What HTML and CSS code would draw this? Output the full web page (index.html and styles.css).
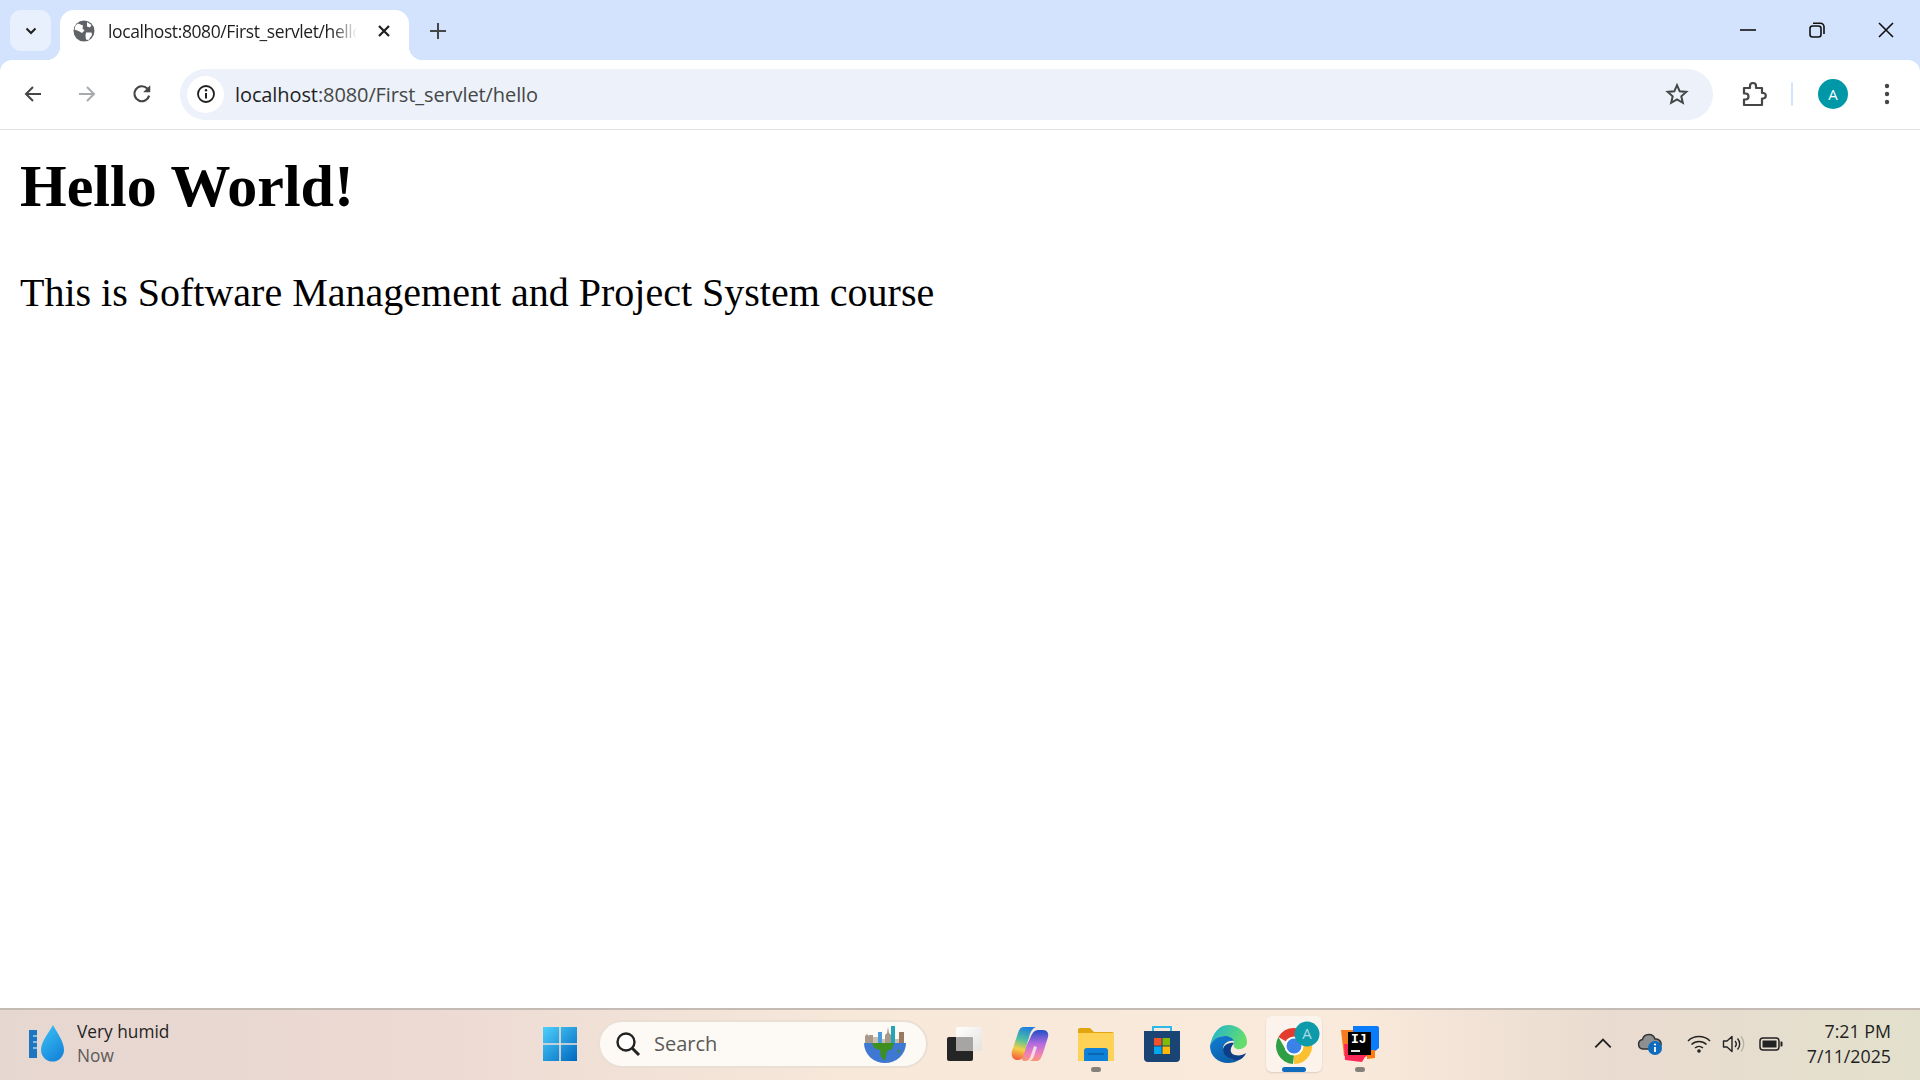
FILE: index.html
```html
<!DOCTYPE html>
<html lang="en">
<head>
    <meta charset="UTF-8">
    <title>localhost:8080/First_servlet/hello</title>
    <link rel="stylesheet" href="styles.css">
</head>
<body>
    <div class="tabstrip">
        <div class="tab-list">
            <svg width="16" height="16" viewBox="0 0 16 16"><path d="M3.500 5.500 8 10l4.500-4.500" fill="none" stroke="#1f1f1f" stroke-width="2"/></svg>
        </div>
        <div class="tab">
            <svg class="tab-globe" width="22" height="22" viewBox="0 0 22 22"><circle cx="11" cy="11" r="10.500" fill="#5f6368"/><path d="M5 3.500 10 5.500 9.500 8.500 11.500 10.500 9 13 5.500 11 1.500 9.500 2.500 5.500zM13 12.500h5.500l.5 2.500-3.500 5-2.500-.5-.5-4zM14 2l4.500 3-1.500 2.500-3-1z" fill="#fff"/></svg>
            <span class="tab-title">localhost:8080/First_servlet/hello</span>
            <svg class="tab-close" width="14" height="14" viewBox="0 0 14 14"><path d="M2 2l10 10M12 2 2 12" stroke="#1f1f1f" stroke-width="2.200"/></svg>
        </div>
        <svg class="new-tab" width="18" height="18" viewBox="0 0 18 18"><path d="M9 1v16M1 9h16" stroke="#444746" stroke-width="2"/></svg>
        <div class="window-controls">
            <svg width="16" height="16" viewBox="0 0 16 16"><path d="M0 8h16" stroke="#111" stroke-width="1.600"/></svg>
            <svg width="16" height="16" viewBox="0 0 16 16"><rect x="1" y="4" width="11" height="11" rx="2.500" fill="none" stroke="#111" stroke-width="1.600"/><path d="M4 1.200h7.500a3.500 3.500 0 0 1 3.500 3.500V12" fill="none" stroke="#111" stroke-width="1.600"/></svg>
            <svg width="16" height="16" viewBox="0 0 16 16"><path d="M1 1l14 14M15 1 1 15" stroke="#111" stroke-width="1.600"/></svg>
        </div>
    </div>

    <div class="toolbar">
        <svg class="nav-icon" width="20" height="20" viewBox="0 0 20 20"><path d="M18 10H3M10 3l-7 7 7 7" fill="none" stroke="#444746" stroke-width="2"/></svg>
        <svg class="nav-icon" width="20" height="20" viewBox="0 0 20 20"><path d="M2 10h15M10 3l7 7-7 7" fill="none" stroke="#a8abae" stroke-width="2"/></svg>
        <svg class="nav-icon" width="22" height="22" viewBox="0 0 20 20"><path d="M16.500 11.500A6.800 6.800 0 1 1 14.800 5" fill="none" stroke="#444746" stroke-width="2"/><path d="M17.500 2v6.500H11z" fill="#444746"/></svg>
        <div class="omnibox">
            <div class="site-info">
                <svg width="20" height="20" viewBox="0 0 20 20"><circle cx="10" cy="10" r="8" fill="none" stroke="#1f1f1f" stroke-width="1.800"/><path d="M10 9v5.500" stroke="#1f1f1f" stroke-width="2"/><circle cx="10" cy="6.300" r="1.200" fill="#1f1f1f"/></svg>
            </div>
            <span class="url"><span class="url-host">localhost</span>:8080/First_servlet/hello</span>
            <svg class="star" width="24" height="24" viewBox="0 0 24 24"><path d="M12 3.200l2.700 6.100 6.600.6-5 4.400 1.500 6.500L12 17.400l-5.800 3.400 1.500-6.500-5-4.400 6.600-.6z" fill="none" stroke="#444746" stroke-width="2"/></svg>
        </div>
        <svg class="extensions" width="26" height="26" viewBox="0 0 26 26"><path d="M3 7h6V5a3 3 0 0 1 6 0v2h6v5h1.500a2.800 2.800 0 0 1 0 5.500H21V24H3v-5.500h1.500a3 3 0 0 0 0-6H3z" fill="none" stroke="#444746" stroke-width="2.200" stroke-linejoin="round"/></svg>
        <div class="separator"></div>
        <div class="avatar">A</div>
        <svg class="menu" width="6" height="22" viewBox="0 0 6 22"><circle cx="3" cy="3" r="2.200" fill="#444746"/><circle cx="3" cy="11" r="2.200" fill="#444746"/><circle cx="3" cy="19" r="2.200" fill="#444746"/></svg>
    </div>

    <main class="page">
        <h1>Hello World!</h1>
        <p>This is Software Management and Project System course</p>
    </main>

    <footer class="taskbar">
        <div class="weather">
            <svg width="40" height="40" viewBox="0 0 40 40">
                <defs><linearGradient id="dropGrad" x1="0" y1="0" x2="0.600" y2="1"><stop offset="0" stop-color="#3cc4f4"/><stop offset="1" stop-color="#1787dc"/></linearGradient></defs>
                <rect x="1" y="6" width="8" height="28" fill="#1e75c0"/><path d="M5 12h4M5 18h4M5 24h4" stroke="#a5d4f3" stroke-width="1.500"/>
                <path d="M25 1c3 6 11 16 11 25a11.500 11.500 0 0 1-23 0C13 17 22 7 25 1z" fill="url(#dropGrad)"/>
            </svg>
            <div class="weather-text">
                <span class="weather-title">Very humid</span>
                <span class="weather-sub">Now</span>
            </div>
        </div>

        <div class="task-center">
            <svg class="start" width="36" height="36" viewBox="0 0 36 36">
                <defs><linearGradient id="winGrad" x1="0" y1="0" x2="1" y2="1"><stop offset="0" stop-color="#4dd0fb"/><stop offset="1" stop-color="#0067c0"/></linearGradient></defs>
                <path d="M1 1h16.200v16.200H1zM18.800 1H35v16.200H18.800zM1 18.800h16.200V35H1zM18.800 18.800H35V35H18.800z" fill="url(#winGrad)"/>
            </svg>
            <div class="search">
                <svg width="26" height="26" viewBox="0 0 26 26"><circle cx="11" cy="11" r="8.500" fill="#fff" stroke="#222" stroke-width="2.400"/><path d="M17 17l7 7" stroke="#222" stroke-width="3"/></svg>
                <span class="search-text">Search</span>
                <svg class="search-art" width="42" height="38" viewBox="0 0 42 38">
                    <path d="M1 20v-9l2-2 2 2v-1h4v10zM21 20V10l2-2 1-6 1 6 2 2v10z" fill="#a8998a"/>
                    <path d="M14 20V7h4v13z" fill="#4b9ade"/><path d="M27 20V1h4v19z" fill="#23a6b4"/><path d="M35 20V7h5v13z" fill="#9a7a5e"/><path d="M9 20v-8h5v8zM18 20v-6h3v6zM31 20v-6h4v6z" fill="#c9bfb2"/>
                    <path d="M0 18h42a21 20 0 0 1-42 0z" fill="#3f78d2"/>
                    <path d="M8 18h22l-2 6-5 2-2 10-4-4-1-7-6-2zM33 26l3-2-1 5z" fill="#3d8f1f"/>
                </svg>
            </div>
            <div class="task-icons">
                <div class="task-icon">
                    <svg width="36" height="36" viewBox="0 0 36 36">
                        <defs><linearGradient id="viewGrad" x1="0" y1="0" x2="1" y2="1"><stop offset="0" stop-color="#fff"/><stop offset="1" stop-color="#e4e2df"/></linearGradient></defs>
                        <rect x="1" y="11" width="26" height="24" rx="2" fill="#252525"/><rect x="10" y="1" width="26" height="24" rx="2" fill="url(#viewGrad)"/><rect x="10" y="11" width="17" height="14" rx="1" fill="#a7a5a3"/>
                    </svg>
                </div>
                <div class="task-icon">
                    <svg width="38" height="36" viewBox="0 0 38 36">
                        <defs>
                            <linearGradient id="copA" x1="0.600" y1="0" x2="0.400" y2="1"><stop offset="0" stop-color="#1f7fe0"/><stop offset="0.400" stop-color="#4fc0a0"/><stop offset="0.700" stop-color="#f4cf45"/><stop offset="1" stop-color="#f4633c"/></linearGradient>
                            <linearGradient id="copB" x1="0.500" y1="0" x2="0.500" y2="1"><stop offset="0" stop-color="#1d4fc8"/><stop offset="0.450" stop-color="#b56be0"/><stop offset="0.800" stop-color="#f284b0"/><stop offset="1" stop-color="#f59a70"/></linearGradient>
                        </defs>
                        <path d="M26 35H14c-3 0-4-2-3-5l9-20c2-4 4-6 8-6h4c4 0 6 3 5 7l-5 16c-2 5-3 8-6 8z" fill="url(#copB)"/>
                        <path d="M12 1h13c-3 1-5 4-6 7l-6 20c-1 4-3 6-6 6H5c-4-1-5-5-4-9L7 7c1-4 3-6 5-6z" fill="url(#copA)"/>
                        <path d="M14 35c3 0 5-2 6-6l3-9 3 1-3 9c-1 3-3 5-5 5z" fill="#fff" opacity="0.700"/>
                    </svg>
                </div>
                <div class="task-icon is-open">
                    <svg width="36" height="34" viewBox="0 0 36 34"><path d="M0 3a2 2 0 0 1 2-2h10l4 4h18a2 2 0 0 1 2 2v6H0z" fill="#e3a50e"/><path d="M0 6h36v28H0z" fill="#fdd257"/><path d="M6 34V24a3 3 0 0 1 3-3h18a3 3 0 0 1 3 3v10z" fill="#0f80d7"/><path d="M10 27h16" stroke="#0a5da6" stroke-width="1.500"/></svg>
                </div>
                <div class="task-icon">
                    <svg width="36" height="36" viewBox="0 0 36 36"><path d="M9 6V1h18v5" fill="none" stroke="#2ab9ea" stroke-width="2"/><path d="M0 5h36v27a4 4 0 0 1-4 4H4a4 4 0 0 1-4-4z" fill="#1a4474"/><path d="M10 12h7.500v7.500H10z" fill="#f0522a"/><path d="M18.500 12H26v7.500h-7.500z" fill="#80bb06"/><path d="M10 20.500h7.500V28H10z" fill="#03a6f0"/><path d="M18.500 20.500H26V28h-7.500z" fill="#ffba08"/></svg>
                </div>
                <div class="task-icon">
                    <svg width="38" height="38" viewBox="0 0 38 38">
                        <defs>
                            <linearGradient id="edgeA" x1="0" y1="0" x2="1" y2="0.400"><stop offset="0" stop-color="#1cb0d8"/><stop offset="1" stop-color="#63de6c"/></linearGradient>
                            <linearGradient id="edgeB" x1="0" y1="0" x2="0.600" y2="1"><stop offset="0" stop-color="#137ed4"/><stop offset="1" stop-color="#0a5ea8"/></linearGradient>
                        </defs>
                        <path d="M19 0c11 0 19 8 19 17 0 5-5 8-10 7-3-1-4-3-3-6 0-4-4-7-9-7-7 0-13 5-15 10C3 9 10 0 19 0z" fill="url(#edgeA)"/>
                        <path d="M1 21c2-6 8-10 15-10 4 0 8 2 9 5-5-1-11 2-11 8 0 6 7 12 16 11-3 2-7 3-11 3C9 38 1 31 1 21z" fill="url(#edgeB)"/>
                        <path d="M25 18c-3-1-11 1-11 7s7 11 16 10c3-1 6-4 7-7-3 2-7 3-11 2-5-1-6-6-1-12z" fill="#0c3f87"/>
                    </svg>
                </div>
                <div class="task-icon is-active">
                    <svg width="52" height="46" viewBox="-6 0 52 46">
                        <path d="M20 7a18 18 0 0 1 15.600 9H20a9 9 0 0 0-7.800 4.500L4.400 16A18 18 0 0 1 20 7z" fill="#e33b2e"/>
                        <path d="M35.600 16A18 18 0 0 1 20 43l7.800-13.500A9 9 0 0 0 27.800 20.500L27 16z" fill="#fbc02d"/>
                        <path d="M4.400 16l7.800 13.500A9 9 0 0 0 20 34l-1 9A18 18 0 0 1 4.400 16z" fill="#2f9e44"/>
                        <path d="M20 43l7.800-13.500L20 34z" fill="#fbc02d"/>
                        <circle cx="20" cy="25" r="9.500" fill="#fff"/><circle cx="20" cy="25" r="7.500" fill="#3b82e8"/>
                        <circle cx="33" cy="13" r="12.500" fill="#0d9bab"/>
                        <text x="33" y="18" text-anchor="middle" class="chrome-badge">A</text>
                    </svg>
                </div>
                <div class="task-icon is-open">
                    <svg width="38" height="36" viewBox="0 0 38 36">
                        <path d="M0 4h14l-2 26H3z" fill="#f57c1f"/><path d="M12 0h24a2 2 0 0 1 2 2v20l-10 8H12z" fill="#087cfa"/><path d="M3 18h25l2 10-6 3-3 5-17-2z" fill="#fe2857"/><path d="M26 24h8v8l-8 1z" fill="#fd7b0f"/>
                        <rect x="7" y="6" width="23" height="23" fill="#000"/>
                        <text x="10" y="17" class="ij-text">IJ</text><path d="M10 25h9" stroke="#fff" stroke-width="1.800"/>
                    </svg>
                </div>
            </div>
        </div>

        <div class="tray">
            <svg class="tray-chevron" width="18" height="11" viewBox="0 0 16 10"><path d="M1 8.500l7-7 7 7" fill="none" stroke="#222" stroke-width="1.700"/></svg>
            <svg class="tray-cloud" width="26" height="22" viewBox="0 0 26 22"><path d="M6 16a4.800 4.800 0 0 1-.5-9.500A6.500 6.500 0 0 1 18 6a5 5 0 0 1 2 10z" fill="#8d8f90" stroke="#333" stroke-width="1.500"/><circle cx="18" cy="15" r="7" fill="#0f6cbd"/><path d="M18 14v5" stroke="#fff" stroke-width="1.800"/><circle cx="18" cy="11.500" r="1.100" fill="#fff"/></svg>
            <svg class="tray-wifi" width="24" height="20" viewBox="0 0 24 20"><path d="M1 7a16 16 0 0 1 22 0M4.500 10.500a11 11 0 0 1 15 0M8 14a6 6 0 0 1 8 0" fill="none" stroke="#222" stroke-width="1.500"/><circle cx="12" cy="17" r="1.800" fill="#222"/></svg>
            <svg class="tray-sound" width="24" height="20" viewBox="0 0 24 20"><path d="M1.500 7v6h3.500l5 4.500v-15L5 7z" fill="none" stroke="#222" stroke-width="1.400" stroke-linejoin="round"/><path d="M13 7a4.500 4.500 0 0 1 0 6M15.500 4.500a8 8 0 0 1 0 11" fill="none" stroke="#222" stroke-width="1.400"/><path d="M19 2.500a11.500 11.500 0 0 1 0 15" fill="none" stroke="#b5b0a6" stroke-width="1.200"/></svg>
            <svg class="tray-battery" width="24" height="14" viewBox="0 0 24 14"><rect x="1" y="1" width="19" height="12" rx="3" fill="none" stroke="#222" stroke-width="1.500"/><rect x="3.500" y="3.500" width="14" height="7" fill="#222"/><path d="M21.500 4.500h1a1 1 0 0 1 1 1v3a1 1 0 0 1-1 1h-1z" fill="#222"/></svg>
            <div class="clock">
                <span>7:21 PM</span>
                <span>7/11/2025</span>
            </div>
        </div>
    </footer>
</body>
</html>
```

FILE: styles.css
```css
* {
    box-sizing: border-box;
}
html, body {
    height: 100%;
}
body {
    margin: 0;
    display: flex;
    flex-direction: column;
    height: 1080px;
    overflow: hidden;
    background-color: #d3e3fd;
    font-family: "Open Sans", "Noto Sans", sans-serif;
    color: #1f1f1f;
}
svg {
    display: block;
    flex-shrink: 0;
}

/* tab strip */
.tabstrip {
    display: flex;
    align-items: flex-end;
    height: 60px;
    padding-left: 10px;
}
.tab-list {
    display: flex;
    align-items: center;
    justify-content: center;
    align-self: flex-start;
    width: 41px;
    height: 41px;
    margin-top: 10px;
    border-radius: 11px;
    background-color: #e9f0fd;
}
.tab {
    position: relative;
    display: flex;
    align-items: center;
    width: 349px;
    height: 50px;
    margin-left: 9px;
    padding: 0 18px 8px 13px;
    background-color: #fff;
    border-radius: 14px 14px 0 0;
}
.tab::before,
.tab::after {
    content: "";
    position: absolute;
    bottom: 0;
    width: 14px;
    height: 14px;
}
.tab::before {
    left: -14px;
    background: radial-gradient(circle at 0 0, transparent 14px, #fff 14.500px);
}
.tab::after {
    right: -14px;
    background: radial-gradient(circle at 100% 0, transparent 14px, #fff 14.500px);
}
.tab-title {
    flex: 1;
    margin-left: 13px;
    overflow: hidden;
    white-space: nowrap;
    font-size: 17.500px;
    letter-spacing: -0.400px;
    -webkit-mask-image: linear-gradient(to right, #000 90%, transparent 100%);
    mask-image: linear-gradient(to right, #000 90%, transparent 100%);
}
.tab-close {
    margin-left: 20px;
}
.new-tab {
    align-self: flex-start;
    margin: 22px 0 0 20px;
}
.window-controls {
    display: flex;
    align-self: flex-start;
    gap: 53px;
    margin: 22px 26px 0 auto;
}

/* toolbar */
.toolbar {
    display: flex;
    align-items: center;
    height: 70px;
    padding: 0 30px 1px 23px;
    background-color: #fff;
    border-bottom: 1px solid #e3e3e3;
    border-radius: 12px 12px 0 0;
}
.nav-icon {
    margin-right: 34px;
}
.nav-icon:nth-child(3) {
    margin-right: 27px;
}
.omnibox {
    display: flex;
    align-items: center;
    width: 1533px;
    height: 51px;
    padding: 0 24px 0 7px;
    border-radius: 26px;
    background-color: #ecf1fa;
}
.site-info {
    display: flex;
    align-items: center;
    justify-content: center;
    width: 37px;
    height: 37px;
    border-radius: 50%;
    background-color: #fff;
}
.url {
    flex: 1;
    margin-left: 11px;
    font-size: 20px;
    letter-spacing: -0.100px;
    color: #444746;
}
.url-host {
    color: #1f1f1f;
}
.extensions {
    margin-left: 28px;
}
.separator {
    width: 2px;
    height: 24px;
    margin-left: 24px;
    border-radius: 1px;
    background-color: #d3e3fd;
}
.avatar {
    display: flex;
    align-items: center;
    justify-content: center;
    width: 30px;
    height: 30px;
    margin-left: 25px;
    border-radius: 50%;
    background-color: #0097a7;
    color: #fff;
    font-size: 15px;
}
.menu {
    margin-left: 36px;
}

/* page content */
.page {
    flex: 1;
    padding: 0 20px;
    background-color: #fff;
    font-family: "Liberation Serif", serif;
    color: #000;
}
.page h1 {
    margin: 22px 0 0;
    font-size: 60px;
    line-height: 69px;
    font-weight: bold;
}
.page p {
    margin: 49px 0 0;
    font-size: 40px;
    line-height: 46px;
}

/* taskbar */
.taskbar {
    display: flex;
    align-items: center;
    height: 72px;
    padding: 0 0 3px 28px;
    border-top: 2px solid #c4bcb4;
    background: linear-gradient(to right, #e7d7d1 0%, #ebd9d2 20%, #f7e8da 45%, #f9eadc 70%, #eadbd0 84%, #e2e0cc 100%);
}
.weather {
    display: flex;
    align-items: center;
    width: 514px;
    gap: 9px;
}
.weather-text {
    display: flex;
    flex-direction: column;
    gap: 3px;
    font-size: 17.300px;
    line-height: 21px;
}
.weather-sub {
    color: #5d5a58;
}
.task-center {
    display: flex;
    align-items: center;
}
.start {
    margin-right: 20px;
}
.search {
    display: flex;
    align-items: center;
    width: 330px;
    height: 48px;
    padding: 0 20px 0 15px;
    border: 2px solid #eadfd3;
    border-radius: 24px;
    background-color: #fdf9f5;
}
.search-text {
    flex: 1;
    margin-left: 13px;
    font-size: 20px;
    color: #5b5957;
}
.task-icons {
    display: flex;
    margin-left: 3px;
}
.task-icon {
    position: relative;
    display: flex;
    align-items: center;
    justify-content: center;
    width: 66px;
    height: 56px;
}
.task-icon.is-open::after,
.task-icon.is-active::before {
    content: "";
    position: absolute;
    bottom: 0;
    left: 50%;
    width: 10px;
    height: 5px;
    margin-left: -5px;
    border-radius: 3px;
    background-color: #858078;
}
.task-icon.is-active {
    width: 56px;
    margin: 0 5px;
    border-radius: 6px;
    background-color: #fcf3ec;
    box-shadow: 0 1px 2px rgba(0, 0, 0, 0.12);
}
.task-icon.is-active::before {
    width: 24px;
    margin-left: -12px;
    background-color: #0f6cbd;
}
.chrome-badge {
    font-family: "Open Sans", sans-serif;
    font-size: 15px;
    fill: #a7dbe2;
}
.ij-text {
    font-family: "Liberation Mono", monospace;
    font-size: 13px;
    font-weight: bold;
    fill: #fff;
}
.tray {
    display: flex;
    align-items: center;
    flex: 1;
    padding-right: 29px;
}
.tray-chevron {
    margin-left: 201px;
}
.tray-cloud {
    margin-left: 25px;
}
.tray-wifi {
    margin-left: 24px;
}
.tray-sound {
    margin-left: 11px;
}
.tray-battery {
    margin-left: 13px;
}
.clock {
    display: flex;
    flex-direction: column;
    align-items: flex-end;
    gap: 4px;
    margin-left: auto;
    font-size: 17.800px;
    line-height: 21px;
}
```
